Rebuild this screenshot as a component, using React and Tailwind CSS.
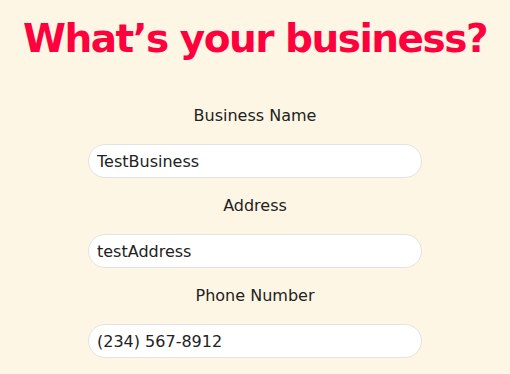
export default function App() {
  const fields = [
    { label: "Business Name", value: "TestBusiness" },
    { label: "Address", value: "testAddress" },
    { label: "Phone Number", value: "(234) 567-8912" },
  ];
  return (
    <div
      className="h-[374px] w-[510px] overflow-hidden bg-[#fef6e4] flex flex-col items-center"
      style={{ fontFamily: '"DejaVu Sans", "Noto Sans", sans-serif' }}
    >
      <h1 className="mt-[16px] text-[39px] leading-[46px] font-bold text-[#ff003c] tracking-[-1.5px]">
        What’s your business?
      </h1>
      <form className="mt-[42px] w-[334px] flex flex-col">
        {fields.map((f) => (
          <div key={f.label} className="flex flex-col">
            <label className="text-center text-[16px] leading-[24px] text-[#222]">{f.label}</label>
            <input
              readOnly
              value={f.value}
              className="mt-4 mb-4 h-[34px] w-full rounded-full border border-[#e3e3e3] bg-white px-[8px] text-[16px] text-[#222] outline-none"
            />
          </div>
        ))}
      </form>
    </div>
  );
}
